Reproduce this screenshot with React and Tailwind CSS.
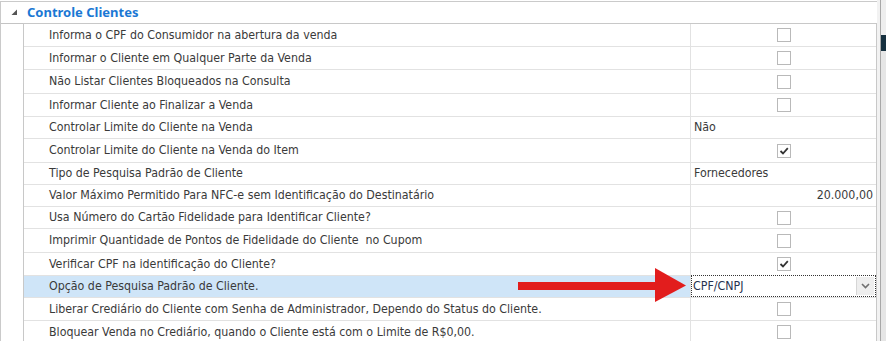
import React from 'react';

const rows = [
    { label: 'Informa o CPF do Consumidor na abertura da venda', type: 'check', h: 'h-[23px]' },
    { label: 'Informar o Cliente em Qualquer Parte da Venda', type: 'check', h: 'h-[23px]' },
    { label: 'Não Listar Clientes Bloqueados na Consulta', type: 'check', h: 'h-[24px]' },
    { label: 'Informar Cliente ao Finalizar a Venda', type: 'check', h: 'h-[23px]' },
    { label: 'Controlar Limite do Cliente na Venda', type: 'text', value: 'Não', h: 'h-[22px]' },
    { label: 'Controlar Limite do Cliente na Venda do Item', type: 'check', checked: true, h: 'h-[24px]' },
    { label: 'Tipo de Pesquisa Padrão de Cliente', type: 'text', value: 'Fornecedores', h: 'h-[22px]' },
    { label: 'Valor Máximo Permitido Para NFC-e sem Identificação do Destinatário', type: 'number', value: '20.000,00', h: 'h-[22px]' },
    { label: 'Usa Número do Cartão Fidelidade para Identificar Cliente?', type: 'check', h: 'h-[22px]' },
    { label: 'Imprimir Quantidade de Pontos de Fidelidade do Cliente  no Cupom', type: 'check', h: 'h-[24px]' },
    { label: 'Verificar CPF na identificação do Cliente?', type: 'check', checked: true, h: 'h-[23px]' },
    { label: 'Opção de Pesquisa Padrão de Cliente.', type: 'combo', value: 'CPF/CNPJ', selected: true, h: 'h-[22px]' },
    { label: 'Liberar Crediário do Cliente com Senha de Administrador, Dependo do Status do Cliente.', type: 'check', h: 'h-[23px]' },
    { label: 'Bloquear Venda no Crediário, quando o Cliente está com o Limite de R$0,00.', type: 'check', h: 'h-[23px]' },
];

const CheckBox = ({ checked }) => (
    <div className="w-[14px] h-[14px] border border-[#b9b9b9] bg-white flex items-center justify-center">
        {checked && (
            <svg width="12" height="12" viewBox="0 0 12 12">
                <path d="M2.5 6 L5 8.5 L9.8 3.2" fill="none" stroke="#333" strokeWidth="1.8" />
            </svg>
        )}
    </div>
);

const ValueCell = ({ row }) => {
    if (row.type === 'check') {
        return (
            <div className="flex-1 flex items-center justify-center">
                <CheckBox checked={row.checked} />
            </div>
        );
    }
    if (row.type === 'number') {
        return <div className="flex-1 flex items-center justify-end pr-[3px]">{row.value}</div>;
    }
    if (row.type === 'combo') {
        return (
            <div className="flex-1 flex items-stretch bg-white border border-dotted border-[#333] -mt-[1px]">
                <div className="flex-1 flex items-center pl-[1px] text-[#26324f]">{row.value}</div>
                <div className="w-[18px] my-[1px] mr-[1px] bg-[#eeeeee] border-l border-[#d6d6d6] flex items-center justify-center">
                    <svg width="9" height="6" viewBox="0 0 9 6">
                        <path d="M1 1 L4.5 4.5 L8 1" fill="none" stroke="#707070" strokeWidth="1.6" />
                    </svg>
                </div>
            </div>
        );
    }
    return <div className="flex-1 flex items-center pl-[3px]">{row.value}</div>;
};

export default function App() {
    return (
        <div className="w-[886px] h-[341px] bg-white flex overflow-hidden relative font-['DejaVu_Sans_Condensed','DejaVu_Sans',sans-serif] [font-stretch:condensed] text-[12.3px] text-[#3a3a3a]">
            <div className="w-[877px] pt-[1px] flex flex-col">
                <div className="flex-1 flex flex-col border-t border-l border-[#cacaca]">
                    <div className="h-[22px] flex items-center border-b border-[#c4c4c4]">
                        <div className="w-[26px] flex items-center justify-center">
                            <svg width="7" height="7" viewBox="0 0 7 7">
                                <path d="M6 0.5 L6 6 L0.5 6 Z" fill="#555" />
                            </svg>
                        </div>
                        <span className="font-bold text-[13px] text-[#1b78d4] font-['Noto_Sans',sans-serif] [font-stretch:normal]">Controle Clientes</span>
                    </div>
                    <div className="flex-1 flex">
                        <div className="w-[22px]" />
                        <div className="flex-1 flex flex-col border-l border-t border-r border-[#c8c8c8] -mt-[1px]">
                            {rows.map((row, i) => (
                                <div key={i} className={`${row.h} flex border-b border-[#e2e2e2] shrink-0`}>
                                    <div className={`w-[667px] flex items-center pl-[25px] border-r border-[#e2e2e2] whitespace-pre ${row.selected ? 'bg-[#cfe5f8]' : ''}`}>
                                        {row.label}
                                    </div>
                                    <ValueCell row={row} />
                                </div>
                            ))}
                        </div>
                    </div>
                </div>
            </div>
            <div className="w-[3px] bg-[#f2f2f2]" />
            <div className="w-[1px] bg-[#a8a8a8]" />
            <div className="flex-1 flex flex-col">
                <div className="h-[35px] bg-[#eeeeee]" />
                <div className="h-[16px] bg-[#16303f]" />
                <div className="flex-1 bg-[#e6e6e6]" />
            </div>
            <svg className="absolute left-[518px] top-[267px]" width="170" height="36" viewBox="0 0 170 36">
                <rect x="0" y="15" width="140" height="8" fill="#e21d1d" />
                <path d="M137 1 L168 18.5 L137 35 Z" fill="#e21d1d" />
            </svg>
        </div>
    );
}
